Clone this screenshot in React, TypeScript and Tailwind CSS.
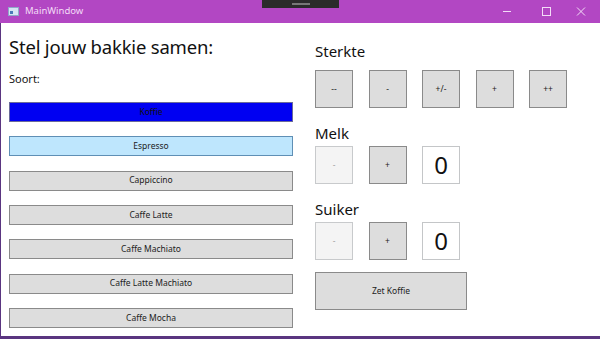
const soorten = [
  "Koffie",
  "Espresso",
  "Cappiccino",
  "Caffe Latte",
  "Caffe Machiato",
  "Caffe Latte Machiato",
  "Caffe Mocha",
];

const sterkte = ["--", "-", "+/-", "+", "++"];

function SquareButton({ label, disabled }: { label: string; disabled?: boolean }) {
  return (
    <div
      className={`w-[38px] h-[38px] flex items-center justify-center text-[8.5px] border ${
        disabled
          ? "bg-[#f4f4f4] border-[#c8cacc] text-[#a0a0a0]"
          : "bg-[#dddddd] border-[#8a8a8a] text-[#222222]"
      }`}
    >
      {label}
    </div>
  );
}

function Counter({ label }: { label: string }) {
  return (
    <div className="flex flex-col">
      <p className="text-[15px] leading-[20px] text-[#111]">{label}</p>
      <div className="flex gap-[15.5px] mt-[3px]">
        <SquareButton label="-" disabled />
        <SquareButton label="+" />
        <div className="w-[38px] h-[38px] bg-white border border-[#c4c6c8] flex items-center justify-center text-[24px] text-[#111]">
          0
        </div>
      </div>
    </div>
  );
}

export default function App() {
  return (
    <div
      className="w-[600px] h-[339px] bg-[#5a3580] flex flex-col overflow-hidden"
      style={{ fontFamily: '"Noto Sans", "Open Sans", sans-serif' }}
    >
      {/* title bar */}
      <div className="h-[23px] bg-[#b247c3] flex items-center relative shrink-0">
        <div className="ml-[8px] w-[11px] h-[9px] bg-[#d6e4f4] border border-[#8fa8c8] flex items-end p-[1px]">
          <div className="w-[3px] h-[3px] bg-[#4a7ab8]" />
        </div>
        <span className="ml-[6px] text-[9.5px] text-[#f3dcf7]">MainWindow</span>
        <div className="absolute left-[262px] top-0 w-[77px] h-[8px] bg-[#2b2b2b] flex justify-center items-center">
          <div className="w-[18px] h-[2px] bg-[#777]" />
        </div>
        <div className="ml-auto flex items-center text-[#f3dcf7]">
          <svg width="46" height="23" viewBox="0 0 46 23">
            <line x1="19" y1="11.5" x2="27" y2="11.5" stroke="currentColor" strokeWidth="1" />
          </svg>
          <svg width="34" height="23" viewBox="0 0 34 23">
            <rect x="12.5" y="7.5" width="8" height="8" fill="none" stroke="currentColor" strokeWidth="1" />
          </svg>
          <svg width="36" height="23" viewBox="0 0 36 23">
            <path d="M13 7.5 L21 15.5 M21 7.5 L13 15.5" stroke="currentColor" strokeWidth="1" />
          </svg>
        </div>
      </div>

      {/* window body */}
      <div className="flex-1 flex bg-white ml-[1px] mb-[3px]">
        <div className="w-[284px] ml-[8px] flex flex-col">
          <h1 className="text-[18.5px] tracking-[-0.2px] leading-[27px] mt-[10px] text-[#111]">
            Stel jouw bakkie samen:
          </h1>
          <p className="text-[11px] leading-[16px] mt-[11px] text-[#111]">Soort:</p>
          <div className="flex flex-col gap-[14.33px] mt-[15px]">
            {soorten.map((s, i) => (
              <div
                key={s}
                className={`h-[20px] border flex items-center justify-center text-[8.5px] ${
                  i === 0
                    ? "bg-[#0000f2] border-[#6b6b9a] text-[#111]"
                    : i === 1
                    ? "bg-[#bee6fd] border-[#5f8fb5] text-[#222]"
                    : "bg-[#dddddd] border-[#8a8a8a] text-[#222]"
                }`}
              >
                {s}
              </div>
            ))}
          </div>
        </div>

        <div className="ml-[22px] flex flex-col">
          <p className="text-[15px] leading-[20px] mt-[18px] text-[#111]">Sterkte</p>
          <div className="flex gap-[15.5px] mt-[9px]">
            {sterkte.map((s) => (
              <SquareButton key={s} label={s} />
            ))}
          </div>
          <div className="mt-[15px]">
            <Counter label="Melk" />
          </div>
          <div className="mt-[15px]">
            <Counter label="Suiker" />
          </div>
          <div className="mt-[12px] w-[152px] h-[38px] bg-[#dddddd] border border-[#8a8a8a] flex items-center justify-center text-[8.5px] text-[#222]">
            Zet Koffie
          </div>
        </div>
      </div>
    </div>
  );
}
